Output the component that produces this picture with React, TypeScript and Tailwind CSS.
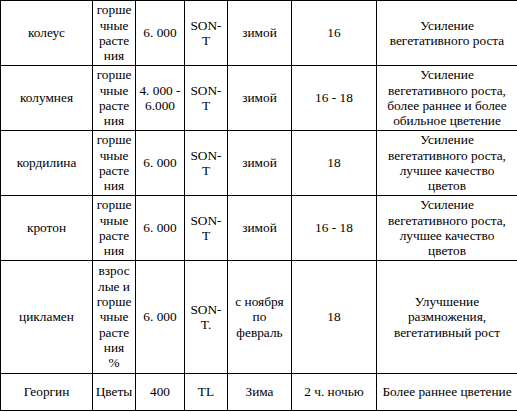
import React from "react";

const L = ({ lines }: { lines: string[] }) => (
  <>
    {lines.map((l, i) => (
      <React.Fragment key={i}>
        {i > 0 && <br />}
        {l}
      </React.Fragment>
    ))}
  </>
);

type Row = { h: string; cells: string[][] };

const rows: Row[] = [
  {
    h: "h-[65px]",
    cells: [
      ["колеус"],
      ["горше", "чные", "расте", "ния"],
      ["6. 000"],
      ["SON-", "T"],
      ["зимой"],
      ["16"],
      ["Усиление", "вегетативного роста"],
    ],
  },
  {
    h: "h-[65px]",
    cells: [
      ["колумнея"],
      ["горше", "чные", "расте", "ния"],
      ["4. 000 -", "6.000"],
      ["SON-", "T"],
      ["зимой"],
      ["16 - 18"],
      ["Усиление", "вегетативного роста,", "более раннее и более", "обильное цветение"],
    ],
  },
  {
    h: "h-[65px]",
    cells: [
      ["кордилина"],
      ["горше", "чные", "расте", "ния"],
      ["6. 000"],
      ["SON-", "T"],
      ["зимой"],
      ["18"],
      ["Усиление", "вегетативного роста,", "лучшее качество", "цветов"],
    ],
  },
  {
    h: "h-[65px]",
    cells: [
      ["кротон"],
      ["горше", "чные", "расте", "ния"],
      ["6. 000"],
      ["SON-", "T"],
      ["зимой"],
      ["16 - 18"],
      ["Усиление", "вегетативного роста,", "лучшее качество", "цветов"],
    ],
  },
  {
    h: "h-[113px]",
    cells: [
      ["цикламен"],
      ["взрос", "лые и", "горше", "чные", "расте", "ния", "%"],
      ["6. 000"],
      ["SON-", "T."],
      ["с ноября", "по", "февраль"],
      ["18"],
      ["Улучшение", "размножения,", "вегетативный рост"],
    ],
  },
  {
    h: "h-[37px]",
    cells: [
      ["Георгин"],
      ["Цветы"],
      ["400"],
      ["TL"],
      ["Зима"],
      ["2 ч. ночью"],
      ["Более раннее цветение"],
    ],
  },
];

export default function App() {
  return (
    <div className="w-[517px] h-[412px] bg-white">
      <table className="w-[517px] table-fixed border-collapse text-black text-[13.33px] leading-[15.33px] font-['Tinos','Liberation_Serif','Noto_Serif','FreeSerif','PT_Serif','DejaVu_Serif',serif]">
        <colgroup>
          <col className="w-[92px]" />
          <col className="w-[43px]" />
          <col className="w-[49px]" />
          <col className="w-[43px]" />
          <col className="w-[64px]" />
          <col className="w-[85px]" />
          <col className="w-[141px]" />
        </colgroup>
        <tbody>
          {rows.map((r, ri) => (
            <tr key={ri} className={r.h}>
              {r.cells.map((c, ci) => (
                <td
                  key={ci}
                  className="border border-black p-0 text-center align-middle whitespace-nowrap overflow-hidden"
                >
                  <L lines={c} />
                </td>
              ))}
            </tr>
          ))}
        </tbody>
      </table>
    </div>
  );
}
